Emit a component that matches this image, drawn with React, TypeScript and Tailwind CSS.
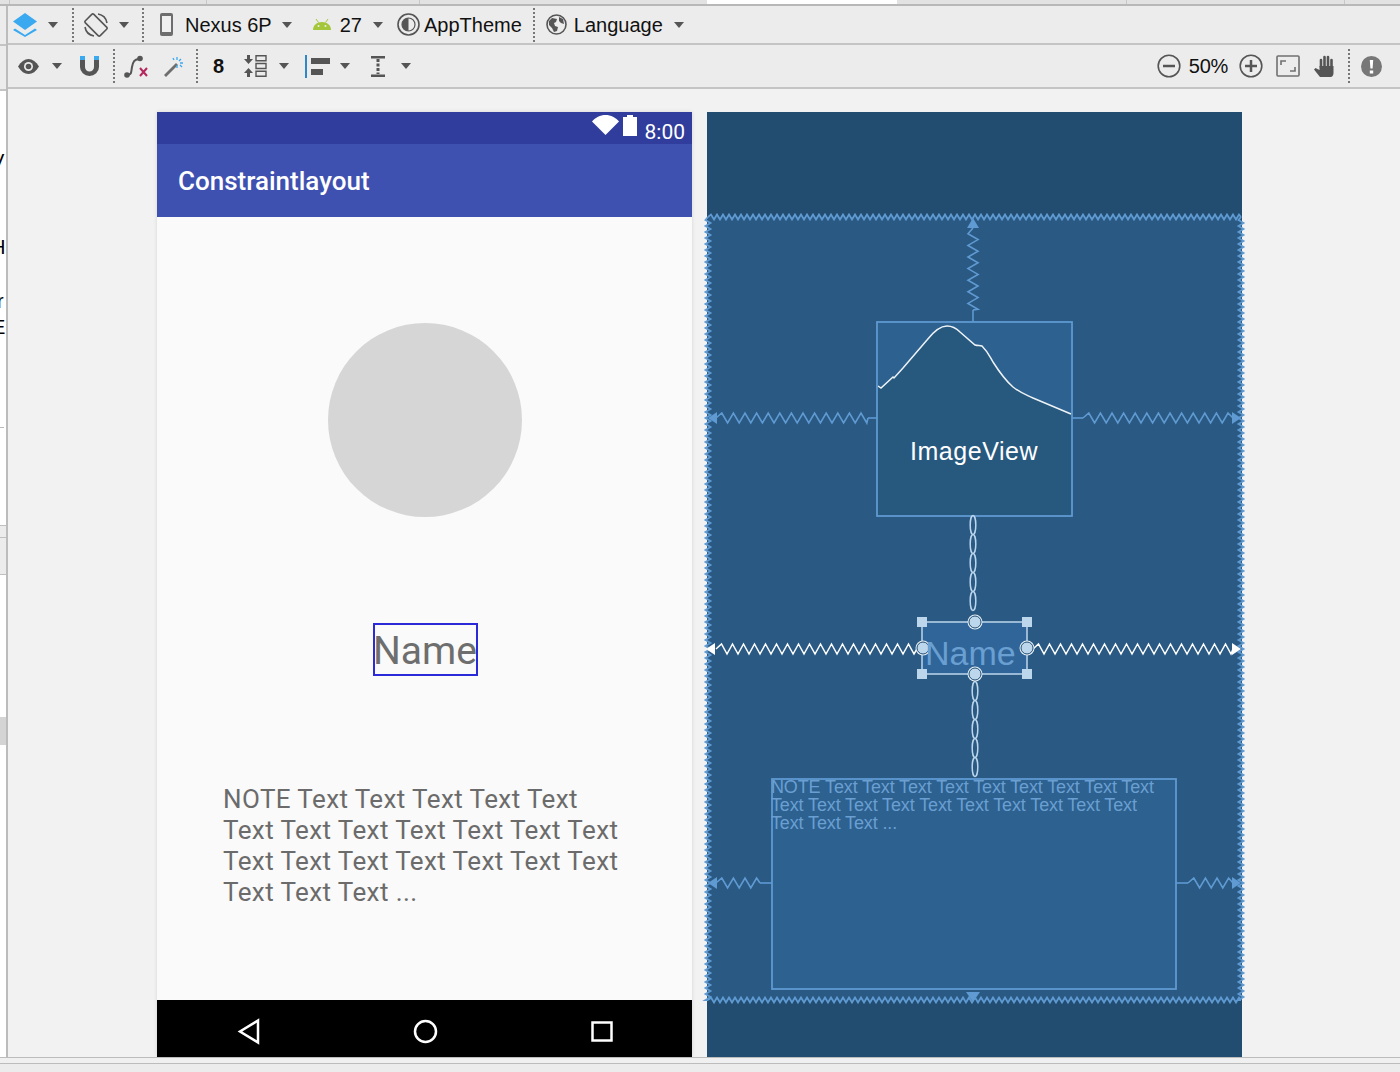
import React from "react";

const zigH = (x1: number, x2: number, y: number, a = 5, step = 3.5) => {
  let d = `M${x1} ${y}`;
  let up = true;
  for (let x = x1 + step; x <= x2; x += step) {
    d += ` L${x} ${y + (up ? -a : a)}`;
    up = !up;
  }
  return d + ` L${x2} ${y}`;
};

const zigV = (y1: number, y2: number, x: number, a = 5, step = 3.5) => {
  let d = `M${x} ${y1}`;
  let up = true;
  for (let y = y1 + step; y <= y2; y += step) {
    d += ` L${x + (up ? -a : a)} ${y}`;
    up = !up;
  }
  return d + ` L${x} ${y2}`;
};

const Caret = ({ className = "" }: { className?: string }) => (
  <svg width="10" height="6" viewBox="0 0 10 6" className={"shrink-0 " + className}>
    <path d="M0 0h10L5 6z" fill="#555" />
  </svg>
);

const Dots = ({ className = "" }: { className?: string }) => (
  <div className={"h-[34px] w-0 shrink-0 border-l-2 border-dotted border-[#777] " + className} />
);

function TopBar() {
  return (
    <div className="flex h-[38px] items-center bg-[#ececec] font-['Liberation_Sans',sans-serif] text-[20px] leading-none text-[#111]">
      <svg width="24" height="24" viewBox="0 0 24 24" className="ml-[5px] shrink-0">
        <path d="M12 0l12 8.5-12 8.5L0 8.5z" fill="#3aa9f0" />
        <path d="M2 15.5l10 6.5 10-6.5 2 1.5-12 7-12-7z" fill="#3aa9f0" />
      </svg>
      <Caret className="ml-[11px]" />
      <Dots className="ml-[14px]" />
      <svg width="24" height="24" viewBox="0 0 24 24" fill="none" stroke="#555" strokeWidth="1.6" className="ml-[10px] shrink-0">
        <rect x="6" y="1.500" width="12" height="21" rx="1.500" transform="rotate(-45 12 12)" />
        <path d="M14 1A11 11 0 0 1 23 10M10 23A11 11 0 0 1 1 14" />
      </svg>
      <Caret className="ml-[11px]" />
      <Dots className="ml-[13px]" />
      <svg width="13" height="23" viewBox="0 0 13 23" className="ml-[16px] shrink-0">
        <rect width="13" height="23" rx="2" fill="#6e6e6e" />
        <rect x="2" y="3" width="9" height="16" fill="#f0f0f0" />
      </svg>
      <span className="ml-[12px]">Nexus 6P</span>
      <Caret className="ml-[10px]" />
      <svg width="18" height="11" viewBox="0 0 18 11" className="ml-[21px] shrink-0">
        <path d="M0 11C0 6 4 3 9 3s9 3 9 8z" fill="#a4c639" />
        <path d="M3 0l2.500 3.500M15 0l-2.500 3.500" stroke="#a4c639" strokeWidth="1" />
        <circle cx="5.500" cy="7" r="1" fill="#ececec" />
        <circle cx="12.500" cy="7" r="1" fill="#ececec" />
      </svg>
      <span className="ml-[9px]">27</span>
      <Caret className="ml-[11px]" />
      <svg width="23" height="23" viewBox="0 0 23 23" className="ml-[14px] shrink-0">
        <circle cx="11.500" cy="11.500" r="10.500" fill="none" stroke="#555" strokeWidth="1.600" />
        <circle cx="11.500" cy="11.500" r="6.500" fill="none" stroke="#555" strokeWidth="1.200" />
        <path d="M11.500 5a6.500 6.500 0 0 0 0 13z" fill="#555" />
      </svg>
      <span className="ml-[4px]">AppTheme</span>
      <Dots className="ml-[11px]" />
      <svg width="21" height="21" viewBox="0 0 21 21" className="ml-[11px] shrink-0">
        <circle cx="10.500" cy="10.500" r="9.500" fill="none" stroke="#555" strokeWidth="1.600" />
        <path d="M3 7l3-3 5 1-1 3-2 1 1 3 3 1-1 4-3 1-2-4-3-3zM13 3l4 2 1 5-3-1-2-2z" fill="#555" />
      </svg>
      <span className="ml-[7px]">Language</span>
      <Caret className="ml-[11px]" />
    </div>
  );
}

function SecondBar() {
  return (
    <div className="flex h-[43px] items-center bg-[#ececec] font-['Liberation_Sans',sans-serif] text-[20px] leading-none text-[#111]">
      <svg width="21" height="15" viewBox="0 0 21 15" className="ml-[10px] shrink-0">
        <path d="M0 7.500C3 2.500 6.500 0 10.500 0S18 2.500 21 7.500C18 12.500 14.500 15 10.500 15S3 12.500 0 7.500z" fill="#555" />
        <circle cx="10.500" cy="7.500" r="4.500" fill="#ececec" />
        <circle cx="10.500" cy="7.500" r="2.800" fill="#555" />
      </svg>
      <Caret className="ml-[13px]" />
      <svg width="19" height="20" viewBox="0 0 19 20" className="ml-[18px] shrink-0">
        <path d="M0 4h5v7a4.500 4.500 0 0 0 9 0V4h5v7a9.500 9 0 0 1-19 0z" fill="#555" />
        <path d="M0 0h5v4H0zM14 0h5v4h-5z" fill="#3aa9f0" />
      </svg>
      <Dots className="ml-[14px]" />
      <svg width="25" height="23" viewBox="0 0 25 23" className="ml-[9px] shrink-0">
        <path d="M3 20c5 0 4-3 5-8s2-8 8-8" fill="none" stroke="#555" strokeWidth="2" />
        <circle cx="3" cy="20" r="2.800" fill="#555" />
        <circle cx="16" cy="3.500" r="2.800" fill="#555" />
        <path d="M16 13l7 8M23 13l-7 8" stroke="#b5265c" strokeWidth="2" />
      </svg>
      <svg width="21" height="21" viewBox="0 0 21 21" className="ml-[14px] shrink-0">
        <path d="M1 19L13 7l2 2L3 21z" fill="#6e6e6e" />
        <path d="M14 1v3M14 9v3M20 7h-3M11 4l-1-2M18 3l-2 2M19 11l-2-2" stroke="#3aa9f0" strokeWidth="1.300" />
      </svg>
      <Dots className="ml-[12px]" />
      <span className="ml-[15px] font-bold">8</span>
      <svg width="23" height="22" viewBox="0 0 23 22" className="ml-[20px] shrink-0">
        <path d="M3 0h3v4h3L4.500 9 0 4h3zM3 22h3v-4h3l-4.500-5L0 18h3z" fill="#555" />
        <path d="M12 .7h10v5H12zM12 8.500h10v5H12zM12 16.300h10v5H12z" fill="none" stroke="#555" strokeWidth="1.400" />
      </svg>
      <Caret className="ml-[12px]" />
      <div className="ml-[16px] flex h-[23px] w-[24px] shrink-0 flex-col justify-center gap-[5px] border-l-2 border-[#2f86c8] pl-[4px]">
        <div className="h-[6px] w-[19px] bg-[#555]" />
        <div className="h-[6px] w-[12px] bg-[#555]" />
      </div>
      <Caret className="ml-[11px]" />
      <svg width="14" height="21" viewBox="0 0 14 21" className="ml-[21px] shrink-0">
        <path d="M0 0h14v2.500H0zM0 18.500h14V21H0z" fill="#555" />
        <path d="M7 3v15" stroke="#555" strokeWidth="3" strokeDasharray="3 1.500" />
      </svg>
      <Caret className="ml-[16px]" />
      <div className="flex-1" />
      <svg width="24" height="24" viewBox="0 0 24 24" fill="none" stroke="#555" className="shrink-0">
        <circle cx="12" cy="12" r="10.800" strokeWidth="1.600" />
        <path d="M6 12h12" strokeWidth="2.500" />
      </svg>
      <span className="ml-[8px] tracking-[-0.3px]">50%</span>
      <svg width="24" height="24" viewBox="0 0 24 24" fill="none" stroke="#555" className="ml-[11px] shrink-0">
        <circle cx="12" cy="12" r="10.800" strokeWidth="1.600" />
        <path d="M6 12h12M12 6v12" strokeWidth="2.500" />
      </svg>
      <svg width="24" height="22" viewBox="0 0 24 22" fill="none" stroke="#707070" className="ml-[13px] shrink-0">
        <rect x="1" y="1" width="22" height="20" rx="1" strokeWidth="1.600" />
        <path d="M5 10V6h5M19 12v4h-5" strokeWidth="1.600" />
      </svg>
      <svg width="22" height="22" viewBox="0 0 22 22" className="ml-[14px] shrink-0">
        <path d="M6 22L0 14.500l1.500-1.500L5.500 15V11h14v7c0 2-1 4-3 4z" fill="#555" />
        <path d="M7 12V5M10.500 12V2M14 12V2M17.500 12V5" stroke="#555" strokeWidth="2.600" strokeLinecap="round" />
      </svg>
      <Dots className="ml-[12px]" />
      <svg width="21" height="21" viewBox="0 0 21 21" className="ml-[11px] mr-[18px] shrink-0">
        <circle cx="10.500" cy="10.500" r="10.500" fill="#777" />
        <path d="M8.800 4h3.400l-.6 8.500H9.400zM8.800 14.500h3.400V17.500H8.800z" fill="#fff" />
      </svg>
    </div>
  );
}

function DevicePhone() {
  return (
    <div className="flex h-[945px] w-[535px] shrink-0 flex-col bg-[#fafafa] font-['Roboto',sans-serif] shadow-[0_0_4px_rgba(0,0,0,0.12)]">
      <div className="flex h-[32px] items-center justify-end bg-[#303d9c] pr-[7px] text-white">
        <svg width="27" height="20" viewBox="0 0 27 20" className="mb-[6px] shrink-0">
          <path d="M0 6.500C3.500 2.500 8 0 13.500 0S23.500 2.500 27 6.500L13.500 20z" fill="#fff" />
        </svg>
        <svg width="14" height="21" viewBox="0 0 14 21" className="mb-[6px] ml-[4px] shrink-0">
          <path d="M4 0h6v2h4v19H0V2h4z" fill="#fff" />
        </svg>
        <span className="ml-[8px] mt-[8px] text-[21px] leading-none">8:00</span>
      </div>
      <div className="flex h-[73px] items-center bg-[#3f51b0] pl-[21px] pt-[2px] text-[26px] font-medium text-white">
        Constraintlayout
      </div>
      <div className="flex flex-1 flex-col items-center">
        <div className="mt-[106px] h-[194px] w-[194px] rounded-full bg-[#d6d6d6]" />
        <div className="ml-[1px] mt-[106px] flex h-[53px] w-[105px] items-center justify-center border-2 border-[#2a2ad8] pt-[4px] text-[39px] leading-none text-[#6e6e6e]">
          Name
        </div>
        <p className="mt-[108px] self-start whitespace-nowrap pl-[66px] text-[26px] leading-[31px] tracking-[0.4px] text-[#6b6b6b]">
          NOTE Text Text Text Text Text
          <br />
          Text Text Text Text Text Text Text
          <br />
          Text Text Text Text Text Text Text
          <br />
          Text Text Text ...
        </p>
      </div>
      <div className="flex h-[57px] items-center bg-black">
        <svg width="535" height="57" viewBox="-1 0 535 57" fill="none" stroke="#fff" strokeWidth="2.500">
          <path d="M100 20.500v22L82 31.500z" />
          <circle cx="267.500" cy="31.500" r="10.500" />
          <rect x="434.500" y="22.500" width="19" height="18" />
        </svg>
      </div>
    </div>
  );
}

const BLUE = "#5f9ad2";
const PALE = "#bcd6ec";

function Chain({ x, y1, y2 }: { x: number; y1: number; y2: number }) {
  const links: number[] = [];
  for (let y = y1 + 9; y < y2; y += 19) links.push(y);
  return (
    <g fill="none" stroke={PALE} strokeWidth="1.500">
      {links.map((y) => (
        <ellipse key={y} cx={x} cy={y} rx="2.800" ry="9.500" />
      ))}
    </g>
  );
}

function BlueprintPhone() {
  return (
    <div className="relative h-[945px] w-[535px] shrink-0 bg-[#224d70] font-['Liberation_Sans',sans-serif]">
      <svg width="535" height="945" viewBox="707 112 535 945" className="absolute inset-0 overflow-visible">
        <rect x="708" y="217" width="533" height="783" fill="#2a5a84" />
        {/* parent bounds */}
        <g fill="none" stroke={BLUE} strokeWidth="1.800">
          <path d={zigH(708, 1241, 217, 2.500, 3)} />
          <path d={zigH(708, 1241, 1000, 2.500, 3)} />
          <path d={zigV(217, 1000, 708, 2.500, 3)} />
          <path d={zigV(217, 1000, 1241, 2.500, 3)} />
        </g>

        {/* ImageView */}
        <rect x="877" y="322" width="195" height="194" fill="#27587e" />
        <path d="M878 386L881 388L893 377L894 378L903 368L927 340C934 331 940 326 947 326C953 326 957 329 960 332L975 345C978 346 980 345 982 346C988 352 989 355 993 362C1000 373 1006 381 1013 387C1022 394 1027 395 1033 398L1071 414L1071 323L878 323Z" fill="#2d6190" />
        <path d="M878 386L881 388L893 377L894 378L903 368L927 340C934 331 940 326 947 326C953 326 957 329 960 332L975 345C978 346 980 345 982 346C988 352 989 355 993 362C1000 373 1006 381 1013 387C1022 394 1027 395 1033 398L1071 414" fill="none" stroke="#eef3f6" strokeWidth="1.500" />
        <rect x="877" y="322" width="195" height="194" fill="none" stroke={BLUE} strokeWidth="1.800" />

        {/* springs */}
        <g fill="none" stroke={BLUE} strokeWidth="1.600">
          <path d="M973 322V310" />
          <path d={zigV(228, 310, 973, 5, 5.800)} />
          <path d={zigH(716, 868, 418, 5, 5.800)} />
          <path d="M868 418H877" />
          <path d={zigH(1083, 1233, 418, 5, 5.800)} />
          <path d="M1072 418H1083" />
          <path d={zigH(716, 760, 883, 5, 5.800)} />
          <path d="M760 883H772" />
          <path d={zigH(1188, 1233, 883, 5, 5.800)} />
          <path d="M1176 883H1188" />
        </g>
        <g fill={BLUE}>
          <path d="M973 218l6 10h-12z" />
          <path d="M708 418l9-6v12z" />
          <path d="M1241 418l-9-6v12z" />
          <path d="M708 883l9-6v12z" />
          <path d="M1241 883l-9-6v12z" />
          <path d="M973 1002l-7-10h14z" />
        </g>

        {/* note box */}
        <rect x="772" y="779" width="404" height="210" fill="#2d6190" stroke={BLUE} strokeWidth="1.800" />

        {/* chains */}
        <Chain x={973} y1={516} y2={612} />
        <Chain x={975} y1={682} y2={778} />

        {/* selected name */}
        <rect x="922" y="622" width="105" height="52" fill="#30659a" stroke={PALE} strokeWidth="1.500" />
        <g fill="none" stroke="#fff" strokeWidth="1.500">
          <path d={zigH(716, 917, 649, 5, 5.500)} />
          <path d={zigH(1033, 1233, 649, 5, 5.500)} />
        </g>
        <g fill="#fff">
          <path d="M706 649l9-6v12z" />
          <path d="M1241 649l-9-6v12z" />
        </g>
        <g fill={PALE}>
          <rect x="917" y="617" width="10" height="10" />
          <rect x="1022" y="617" width="10" height="10" />
          <rect x="917" y="669" width="10" height="10" />
          <rect x="1022" y="669" width="10" height="10" />
        </g>
        <g fill={PALE} stroke="#224d70" strokeWidth="1">
          {[
            [975, 622],
            [923, 648],
            [1027, 648],
            [975, 674],
          ].map(([cx, cy]) => (
            <g key={`${cx}-${cy}`}>
              <circle cx={cx} cy={cy} r="7.500" fill="#e8f1f8" stroke="none" />
              <circle cx={cx} cy={cy} r="6" />
            </g>
          ))}
        </g>
      </svg>
      <div className="absolute left-[203px] top-[324px] text-[25px] leading-[30px] tracking-[0.55px] text-white">
        ImageView
      </div>
      <div className="absolute left-[218px] top-[521px] text-[34px] leading-[40px] text-[#6a9fd2]">
        Name
      </div>
      <div className="absolute left-[64px] top-[666px] whitespace-nowrap text-[18px] leading-[18px] tracking-[-0.13px] text-[#6a9fd2]">
        NOTE Text Text Text Text Text Text Text Text Text
        <br />
        Text Text Text Text Text Text Text Text Text Text
        <br />
        Text Text Text ...
      </div>
    </div>
  );
}

function LeftStrip() {
  return (
    <div className="relative flex w-[6px] shrink-0 flex-col overflow-hidden bg-white font-['Liberation_Sans',sans-serif] text-[20px] leading-none text-black">
      <div className="h-[38px] shrink-0 bg-[#ececec]" />
      <div className="h-[2px] shrink-0 bg-[#c4c4c4]" />
      <div className="h-[43px] shrink-0 bg-[#ececec]" />
      <div className="h-[2px] shrink-0 bg-[#c4c4c4]" />
      <div className="h-[336px] shrink-0" />
      <div className="h-[1px] w-[4px] shrink-0 bg-[#bbbbbb]" />
      <div className="h-[97px] shrink-0" />
      <div className="h-[12px] shrink-0 border-t border-[#c0c0c0] bg-[#ececec]" />
      <div className="h-[38px] shrink-0 border-y border-[#c0c0c0] bg-[#ececec]" />
      <div className="h-[142px] shrink-0" />
      <div className="h-[28px] shrink-0 bg-[#d4d4d4]" />
      <span className="absolute left-[-9px] top-[145px]">V</span>
      <span className="absolute left-[-9px] top-[231px]">H</span>
      <span className="absolute left-[-3px] top-[285px]">r</span>
      <span className="absolute left-[-8px] top-[311px]">E</span>
    </div>
  );
}

export default function App() {
  return (
    <div className="flex h-[1072px] w-[1400px] flex-col overflow-hidden bg-[#ececec]">
      <div className="flex h-[4px] shrink-0 bg-[#e2e2e2]">
        <div className="w-[10px] border-r border-[#c8c8c8]" />
        <div className="w-[197px] border-r border-[#c8c8c8]" />
        <div className="w-[213px] border-r border-[#c8c8c8]" />
        <div className="w-[287px]" />
        <div className="w-[190px] bg-white" />
        <div className="w-[230px] border-r border-[#c8c8c8]" />
        <div className="w-[218px] border-r border-[#c8c8c8]" />
      </div>
      <div className="h-[2px] shrink-0 bg-[#b8b8b8]" />
      <div className="flex h-[1051px] shrink-0">
        <LeftStrip />
        <div className="flex w-[1394px] flex-col border-l-2 border-[#bcbcbc]">
          <TopBar />
          <div className="h-[2px] shrink-0 bg-[#c4c4c4]" />
          <SecondBar />
          <div className="h-[2px] shrink-0 bg-[#c4c4c4]" />
          <div className="flex flex-1 gap-[15px] bg-[#f2f2f2] pl-[149px] pt-[23px]">
            <DevicePhone />
            <BlueprintPhone />
          </div>
        </div>
      </div>
      <div className="h-[1px] shrink-0 bg-[#bcbcbc]" />
      <div className="h-[5px] shrink-0 bg-[#f0f0f0]" />
      <div className="h-[1px] shrink-0 bg-[#bcbcbc]" />
      <div className="flex-1 bg-[#ececec]" />
    </div>
  );
}
